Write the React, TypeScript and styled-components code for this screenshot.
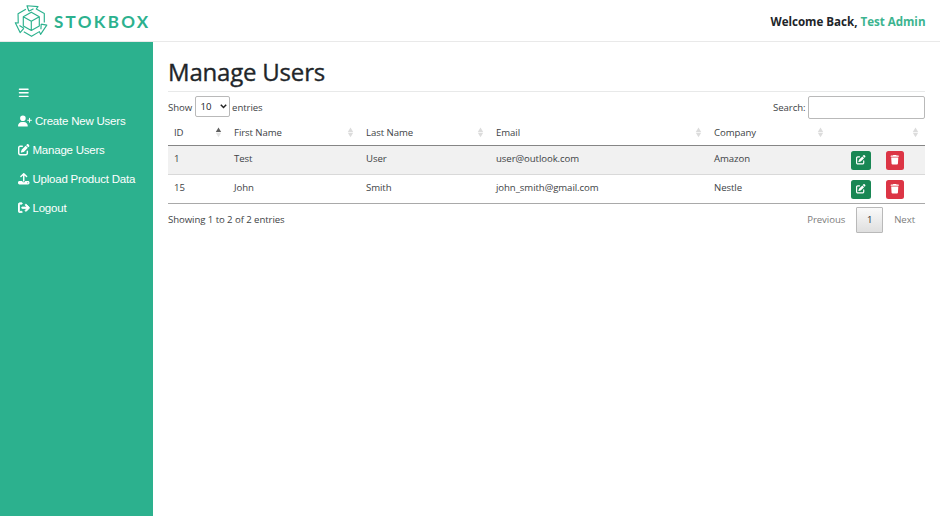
import React from "react";
import styled, { createGlobalStyle } from "styled-components";
import {
  FaBars,
  FaUserPlus,
  FaPenToSquare,
  FaUpload,
  FaArrowRightFromBracket,
  FaTrash,
} from "react-icons/fa6";

const GlobalStyle = createGlobalStyle`
  *, *::before, *::after { box-sizing: border-box; }
  body { margin: 0; background: #fff; color: #212529; font-family: "Open Sans", "Noto Sans", sans-serif; overflow: hidden; }
`;

const Page = styled.div`
  height: 529px;
  display: flex;
  flex-direction: column;
`;

const Header = styled.header`
  height: 42px;
  flex: none;
  display: flex;
  align-items: center;
  justify-content: space-between;
  padding: 0 14.5px 0 14px;
  border-bottom: 1px solid #e9e9e9;
`;

const Brand = styled.div`
  display: flex;
  align-items: center;
  gap: 5px;
  color: #2cb18e;
`;

const BrandName = styled.span`
  font: 700 17px/20px "Lato", sans-serif;
  letter-spacing: 2.3px;
  padding-top: 2px;
`;

const Welcome = styled.div`
  font-size: 11.6px;
  font-weight: 700;
  line-height: 16px;
  letter-spacing: -0.02px;
  white-space: nowrap;
  padding-top: 2px;
`;

const UserName = styled.span`
  color: #3cb48f;
`;

const Body = styled.div`
  display: flex;
  height: 474px;
`;

const Sidebar = styled.nav`
  width: 153px;
  flex: none;
  background: #2cb18e;
  color: #fff;
  padding: 36px 0 0 18px;
`;

const NavItem = styled.div<{ $gap?: number }>`
  height: 28.8px;
  display: flex;
  align-items: center;
  gap: ${(p) => p.$gap ?? 3}px;
  font: 11.5px/16px "Liberation Sans", Arial, sans-serif;
  letter-spacing: -0.22px;
  white-space: nowrap;
  svg { flex: none; }
`;

const Main = styled.main`
  flex: 1;
  padding: 14px 15px 0 15px;
  font-size: 9.6px;
  line-height: 14px;
  letter-spacing: -0.07px;
  color: #404346;
`;

const Title = styled.h1`
  margin: 0;
  height: 36px;
  font-size: 24px;
  font-weight: 500;
  line-height: 32px;
  letter-spacing: -0.2px;
  color: #212529;
  -webkit-text-stroke: 0.35px #212529;
  border-bottom: 1px solid #e8e9e9;
`;

const Controls = styled.div`
  height: 28px;
  padding-top: 4px;
  display: flex;
  justify-content: space-between;
`;

const Control = styled.label`
  display: flex;
  align-items: center;
  gap: 2.5px;
  height: 23px;
`;

const LengthBox = styled.span`
  width: 35px;
  height: 21px;
  margin-top: -2px;
  padding: 0 2px 0 5px;
  display: flex;
  align-items: center;
  justify-content: space-between;
  border: 1px solid #b9b9b9;
  border-radius: 2px;
  color: #212529;
`;

const SearchInput = styled.input`
  width: 117px;
  height: 23px;
  border: 1px solid #b9b9b9;
  border-radius: 2px;
  background: #fff;
  outline: none;
`;

const Table = styled.div`
  border-bottom: 1px solid #a9a9a9;
`;

const Row = styled.div<{ $kind: "head" | "odd" | "even" }>`
  display: grid;
  grid-template-columns: 60px 132px 130px 218px 122px 1fr;
  align-items: center;
  height: ${(p) => (p.$kind === "head" ? 26 : p.$kind === "odd" ? 29 : 28)}px;
  background: ${(p) => (p.$kind === "odd" ? "#f1f1f1" : "#fff")};
  border-bottom: ${(p) =>
    p.$kind === "head" ? "1px solid #858585" : p.$kind === "odd" ? "1px solid #d9d9d9" : "none"};
`;

const Cell = styled.div<{ $head?: boolean }>`
  display: flex;
  align-items: center;
  justify-content: space-between;
  padding: 0 6px;
  padding-bottom: ${(p) => (p.$head ? 0 : 3)}px;
`;

const Actions = styled.div`
  display: flex;
  gap: 15px;
  padding-left: 21px;
`;

const ActionButton = styled.button<{ $danger?: boolean }>`
  width: ${(p) => (p.$danger ? 18 : 20)}px;
  height: 19px;
  border: 0;
  padding: 0;
  border-radius: 2.5px;
  display: flex;
  align-items: center;
  justify-content: center;
  color: #fff;
  background: ${(p) => (p.$danger ? "#dc3545" : "#198754")};
`;

const Footer = styled.div`
  display: flex;
  justify-content: space-between;
  align-items: center;
  height: 32px;
`;

const Pager = styled.div`
  display: flex;
  align-items: center;
  color: #7c7c7c;
  padding-right: 10px;
`;

const PageNumber = styled.span`
  width: 27px;
  height: 26px;
  margin: 0 11px;
  display: flex;
  align-items: center;
  justify-content: center;
  border: 1px solid #b9b9b9;
  border-radius: 1px;
  background: linear-gradient(#fafafa, #dfdfdf);
  color: #333;
`;

const arrowPath = "M-2.4 -10L-4.3 -15.4L6.7 -14.6L5 -12.2L13 -7.8V1.2M-2.4 -10L2.2 -12.4";

const Logo = () => (
  <svg width="35" height="36" viewBox="-17.3 -18.2 35 36" fill="none" stroke="#2cb18e" strokeWidth="1.15" strokeLinejoin="round">
    <path d="M0 -9L8 -4.5V4.7L0 9.3L-8 4.7V-4.5ZM-8 -4.5L0 0L8 -4.5M0 0V9.3" />
    {[0, 120, 240].map((a) => (
      <path key={a} d={arrowPath} transform={`rotate(${a})`} />
    ))}
  </svg>
);

const Sort = ({ active = false }: { active?: boolean }) => (
  <svg width="7" height="11" viewBox="0 0 7 11">
    <path d="M3.5 .5L6.2 5.1H.8Z" fill={active ? "#606060" : "#dcdcdc"} />
    <path d="M3.5 10.3L.8 5.7H6.2Z" fill={active ? "#e4e4e4" : "#dcdcdc"} />
  </svg>
);

const Chevron = () => (
  <svg width="7" height="5" viewBox="0 0 7 5" fill="none" stroke="#222" strokeWidth="1.5">
    <path d="M.8 .8L3.5 3.5L6.2 .8" />
  </svg>
);

const columns = ["ID", "First Name", "Last Name", "Email", "Company", ""];
const users = [
  ["1", "Test", "User", "user@outlook.com", "Amazon"],
  ["15", "John", "Smith", "john_smith@gmail.com", "Nestle"],
];

export default function App() {
  return (
    <Page>
      <GlobalStyle />
      <Header>
        <Brand>
          <Logo />
          <BrandName>STOKBOX</BrandName>
        </Brand>
        <Welcome>
          Welcome Back, <UserName>Test Admin</UserName>
        </Welcome>
      </Header>
      <Body>
        <Sidebar>
          <NavItem><FaBars size={11.5} /></NavItem>
          <NavItem><FaUserPlus size={14} />Create New Users</NavItem>
          <NavItem><FaPenToSquare size={11.5} />Manage Users</NavItem>
          <NavItem><FaUpload size={11.5} />Upload Product Data</NavItem>
          <NavItem><FaArrowRightFromBracket size={11.5} strokeWidth={36} stroke="#fff" />Logout</NavItem>
        </Sidebar>
        <Main>
          <Title>Manage Users</Title>
          <Controls>
            <Control>
              Show
              <LengthBox>10<Chevron /></LengthBox>
              entries
            </Control>
            <Control>
              Search:
              <SearchInput />
            </Control>
          </Controls>
          <Table>
            <Row $kind="head">
              {columns.map((c, i) => (
                <Cell key={i} $head>
                  <span>{c}</span>
                  <Sort active={i === 0} />
                </Cell>
              ))}
            </Row>
            {users.map((u, i) => (
              <Row key={u[0]} $kind={i % 2 ? "even" : "odd"}>
                {u.map((v) => (
                  <Cell key={v}>{v}</Cell>
                ))}
                <Actions>
                  <ActionButton><FaPenToSquare size={9.5} /></ActionButton>
                  <ActionButton $danger><FaTrash size={9.5} /></ActionButton>
                </Actions>
              </Row>
            ))}
          </Table>
          <Footer>
            <span>Showing 1 to 2 of 2 entries</span>
            <Pager>
              Previous
              <PageNumber>1</PageNumber>
              Next
            </Pager>
          </Footer>
        </Main>
      </Body>
    </Page>
  );
}
